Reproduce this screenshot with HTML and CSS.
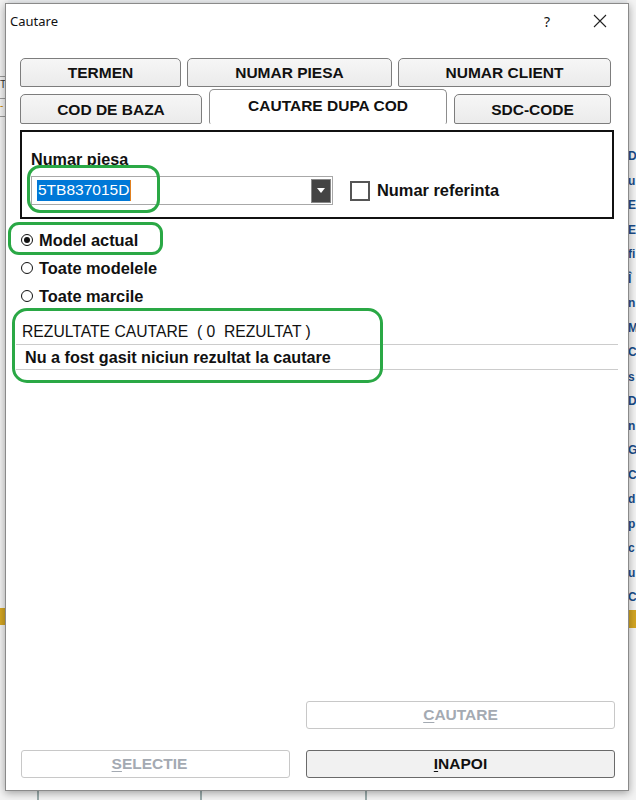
FILE: index.html
```html
<!DOCTYPE html>
<html>
<head>
<meta charset="utf-8">
<link rel="stylesheet" href="styles.css">
</head>
<body>
<div class="desk">
  <div class="bg-left">
    <div class="bl-line l1"></div>
    <div class="bl-txt t1">T</div>
    <div class="bl-line l2"></div>
    <div class="bl-txt t2">-</div>
    <div class="bl-line l3"></div>
    <div class="bl-gold"></div>
  </div>
  <div class="bg-right">
    <span>D</span><span>u</span><span>E</span><span>E</span><span>fi</span><span>Î</span><span>n</span><span>M</span><span>C</span><span>s</span><span>D</span><span>n</span><span>G</span><span>C</span><span>d</span><span>p</span><span>c</span><span>u</span><span>C</span>
    <div class="br-gold"></div>
  </div>
  <div class="bg-bottom">
    <div class="bb-line b1"></div>
    <div class="bb-line b2"></div>
    <div class="bb-line b3"></div>
  </div>

  <div class="dialog">
    <div class="titlebar">
      <span class="title">Cautare</span>
      <span class="help">?</span>
      <svg class="close" width="14" height="14" viewBox="0 0 14 14"><path d="M1 1L13 13M13 1L1 13" stroke="#222" stroke-width="1.1"/></svg>
    </div>
    <div class="content">
      <div class="tabs row1">
        <div class="tab w-termen">TERMEN</div>
        <div class="tab w-piesa">NUMAR PIESA</div>
        <div class="tab w-client">NUMAR CLIENT</div>
      </div>
      <div class="tabs row2">
        <div class="tab w-baza">COD DE BAZA</div>
        <div class="tab active w-cod">CAUTARE DUPA COD</div>
        <div class="tab w-sdc">SDC-CODE</div>
      </div>
      <div class="panel">
        <div class="lbl">Numar piesa</div>
        <div class="field-row">
          <div class="combo">
            <span class="sel">5TB837015D</span>
            <span class="drop"><svg width="8" height="5" viewBox="0 0 8 5"><path d="M0 0H8L4 5Z" fill="#fff"/></svg></span>
          </div>
          <span class="check"></span>
          <span class="check-lbl">Numar referinta</span>
        </div>
      </div>
      <div class="radios">
        <div class="radio on"><span class="dot"></span>Model actual</div>
        <div class="radio"><span class="dot"></span>Toate modelele</div>
        <div class="radio"><span class="dot"></span>Toate marcile</div>
      </div>
      <div class="results">
        <div class="res-head">REZULTATE CAUTARE&nbsp; ( 0&nbsp; REZULTAT )</div>
        <div class="res-row">Nu a fost gasit niciun rezultat la cautare</div>
      </div>
      <div class="spacer"></div>
      <div class="btn-row top">
        <div class="btn disabled wide"><u>C</u>AUTARE</div>
      </div>
      <div class="btn-row bottom">
        <div class="btn disabled sel-btn"><u>S</u>ELECTIE</div>
        <div class="btn wide"><u>I</u>NAPOI</div>
      </div>
    </div>
    <div class="mark m1"></div>
    <div class="mark m2"></div>
    <div class="mark m3"></div>
  </div>
</div>
</body>
</html>
```
FILE: styles.css
```css
* { box-sizing: border-box; }
html, body { margin: 0; padding: 0; }
body {
  width: 636px;
  height: 800px;
  overflow: hidden;
  background: #eceef0;
  font-family: "Liberation Sans", Arial, sans-serif;
}
.desk { position: relative; width: 636px; height: 800px; }

.bg-left {
  position: absolute; left: 0; top: 0; width: 8px; height: 800px;
  background: #f2f2f2;
}
.bl-line { position: absolute; left: 0; width: 8px; height: 1px; background: #999; }
.l1 { top: 76px; } .l2 { top: 98px; } .l3 { top: 116px; }
.bl-txt { position: absolute; left: 0; font-size: 10px; color: #333; }
.t1 { top: 79px; } .t2 { top: 100px; color: #c80; }
.bl-gold { position: absolute; left: 0; top: 608px; width: 8px; height: 17px; background: #d4a623; }

.bg-right {
  position: absolute; right: 0; top: 0; width: 9px; height: 800px;
  background: #f4f4f4;
  padding-top: 144px;
  display: flex; flex-direction: column;
  font-size: 13px; font-weight: bold; color: #1a4d8a; line-height: 24.5px;
  overflow: hidden;
}
.bg-right span { padding-left: 1px; font-size: 12px; white-space: nowrap; }
.br-gold { width: 9px; height: 18px; background: #d4a623; }

.bg-bottom { position: absolute; left: 0; bottom: 0; width: 636px; height: 10px; background: #f3f3f3; }
.bb-line { position: absolute; top: 0; width: 2px; height: 10px; background: #9aa; }
.b1 { left: 37px; } .b2 { left: 200px; } .b3 { left: 365px; }

.dialog {
  position: absolute; left: 5px; top: 3px; width: 624px; height: 788px;
  background: #fff;
  border: 1px solid #8a8a8a;
  box-shadow: 0 2px 8px rgba(0,0,0,0.35);
  display: flex; flex-direction: column;
}
.titlebar {
  height: 34px; display: flex; align-items: center;
  padding-left: 4px;
  font-family: "Noto Sans", "Open Sans", sans-serif;
  font-size: 13px; color: #111;
}
.title { flex: 1; }
.help { margin-right: 43px; font-size: 14px; }
.close { margin-right: 21px; }

.content {
  flex: 1; display: flex; flex-direction: column;
  padding: 20px 14px 12px 14px;
}
.tabs { display: flex; }
.row1 { gap: 6px; height: 29px; }
.row2 { gap: 7px; height: 35px; margin-top: 2px; align-items: flex-end; }
.tab {
  height: 29px;
  border: 1px solid #7d7d7d;
  border-radius: 5px 5px 2px 2px;
  background: linear-gradient(#f6f6f6, #ebebeb);
  display: flex; align-items: center; justify-content: center;
  font-weight: bold; font-size: 15.5px; color: #111;
  padding-top: 1px;
}
.row2 .tab { height: 30px; padding-top: 1px; }
.row2 .tab.active {
  height: 35px; background: #fff; border-color: #8d8d8d;
  border-bottom: none; padding-top: 0; padding-bottom: 3px;
}
.w-termen { width: 161px; }
.w-piesa { width: 205px; }
.w-client { width: 213px; }
.w-baza { width: 182px; }
.w-cod { width: 238px; }
.w-sdc { width: 157px; }

.panel {
  margin-top: 6px;
  width: 594px; height: 89px;
  border: 2px solid #111;
  padding: 18px 0 0 9px;
}
.lbl { font-weight: bold; font-size: 16.2px; color: #111; height: 21px; }
.field-row { display: flex; align-items: center; margin-top: 5px; }
.combo {
  width: 302px; height: 29px;
  border: 1px solid #a8a8a8;
  display: flex; align-items: center;
  padding: 0 1px 0 5px;
}
.sel {
  background: #0078d7; color: #fff; font-size: 15.5px;
  padding: 1px 1px 2px 1px; line-height: 18px;
  border-right: 1px solid #e08020;
}
.drop {
  margin-left: auto; width: 20px; height: 24px;
  background: #444; border: 1px solid #888;
  display: flex; align-items: center; justify-content: center;
}
.check {
  width: 20px; height: 20px; border: 2px solid #555; background: #fff;
  margin-left: 17px;
}
.check-lbl { font-weight: bold; font-size: 16.4px; color: #111; margin-left: 7px; }

.radios { margin-top: 7px; display: flex; flex-direction: column; }
.radio {
  height: 28px; display: flex; align-items: center;
  font-weight: bold; font-size: 16.4px; color: #111;
}
.dot {
  width: 12px; height: 12px; border: 1.6px solid #111; border-radius: 50%;
  margin: 0 6px 0 1px; display: inline-flex; align-items: center; justify-content: center;
}
.radio.on .dot::after {
  content: ""; width: 6px; height: 6px; border-radius: 50%; background: #111;
}

.results { margin-top: 0; margin-left: -4px; margin-right: -4px; }
.res-head {
  height: 35px; padding: 13px 0 0 6px;
  font-size: 15.7px; color: #111; line-height: 18px;
  border-bottom: 1px solid #ccc;
}
.res-row {
  height: 25px; padding: 3px 0 0 9px; line-height: 18px;
  font-weight: bold; font-size: 16.2px; color: #111;
  border-bottom: 1px solid #ccc;
}

.spacer { flex: 1; }
.btn-row { display: flex; }
.btn-row.top { justify-content: flex-end; margin-right: -1px; }
.btn-row.bottom { margin-top: 21px; justify-content: space-between; margin-right: -1px; }
.btn {
  height: 28px; border: 1px solid #6a6a6a; border-radius: 3px;
  background: #f1f1f1;
  display: flex; align-items: center; justify-content: center;
  font-weight: bold; font-size: 15.5px; color: #111;
}
.btn.disabled { border-color: #c8c8c8; background: #fff; color: #a4aab2; }
.btn u { text-decoration-thickness: 1px; text-underline-offset: 2px; }
.wide { width: 309px; }
.sel-btn { width: 269px; margin-left: 1px; padding-right: 12px; }

.mark {
  position: absolute; border: 3px solid #2aa845; border-radius: 13px;
}
.m1 { left: 21px; top: 161px; width: 133px; height: 48px; }
.m2 { left: 2px; top: 218px; width: 155px; height: 33px; border-radius: 11px; }
.m3 { left: 6px; top: 304px; width: 371px; height: 75px; border-radius: 15px; }
```
